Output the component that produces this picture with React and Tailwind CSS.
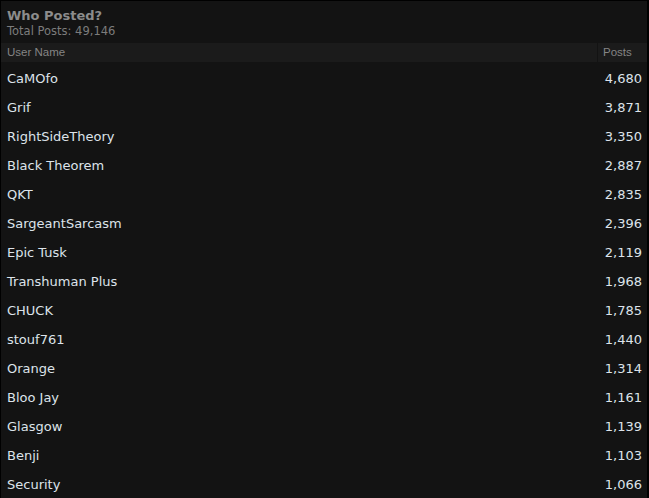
const ROWS = [
    ['CaMOfo', '4,680'],
    ['Grif', '3,871'],
    ['RightSideTheory', '3,350'],
    ['Black Theorem', '2,887'],
    ['QKT', '2,835'],
    ['SargeantSarcasm', '2,396'],
    ['Epic Tusk', '2,119'],
    ['Transhuman Plus', '1,968'],
    ['CHUCK', '1,785'],
    ['stouf761', '1,440'],
    ['Orange', '1,314'],
    ['Bloo Jay', '1,161'],
    ['Glasgow', '1,139'],
    ['Benji', '1,103'],
    ['Security', '1,066']
];

export default function App() {
    return (
        <div
            className="h-[498px] w-[649px] overflow-hidden border-l border-t border-r-2 border-black bg-[#131313]"
            style={{ fontFamily: '"DejaVu Sans", Verdana, sans-serif' }}
        >
            <div className="px-[6px] pt-[6px] pb-[5px]">
                <h1 className="text-[13px] font-bold leading-[17px] text-[#8c8c8c]">Who Posted?</h1>
                <p className="text-[11.5px] leading-[14px] text-[#7c7c7c]">Total Posts: 49,146</p>
            </div>
            <div
                className="flex h-[19px] items-center bg-[#1b1b1b] text-[11.5px] text-[#858585]"
                style={{ fontFamily: '"Liberation Sans", Arial, sans-serif' }}
            >
                <div className="flex-1 pl-[6px]">User Name</div>
                <div className="flex h-full w-[50px] items-center border-l border-[#131313] pl-[5px]">Posts</div>
            </div>
            {ROWS.map(([name, posts]) => (
                <div key={name} className="flex h-[29px] items-center justify-between pt-[5px] pl-[6px] pr-[5px] text-[13px] text-[#dde3ea]">
                    <span>{name}</span>
                    <span>{posts}</span>
                </div>
            ))}
        </div>
    );
}
